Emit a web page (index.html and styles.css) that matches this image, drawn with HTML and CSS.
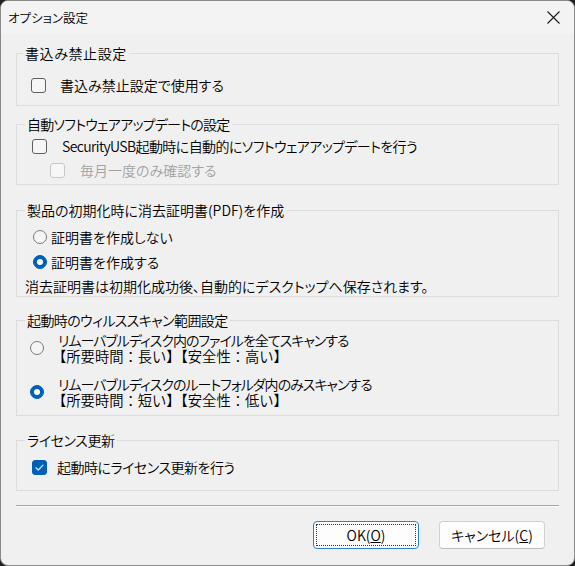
FILE: index.html
```html
<!DOCTYPE html>
<html lang="ja">
<head>
<meta charset="utf-8">
<title>オプション設定</title>
<link rel="stylesheet" href="styles.css">
</head>
<body>
<div class="window">
  <div class="titlebar">
    <span class="title">オプション設定</span>
    <span class="close"><svg width="13" height="13" viewBox="0 0 13 13"><path d="M0.5 0.5L12.5 12.5M12.5 0.5L0.5 12.5" stroke="#1a1a1a" stroke-width="1.1" fill="none"/></svg></span>
  </div>
  <div class="content">
    <fieldset class="group g1">
      <legend class="legend first">書込み禁止設定</legend>
      <div class="row">
        <span class="check"></span><span class="label gap14">書込み禁止設定で使用する</span>
      </div>
    </fieldset>

    <fieldset class="group g2">
      <legend class="legend t075">自動ソフトウェアアップデートの設定</legend>
      <div class="row">
        <span class="check"></span><span class="label gap15 t06">SecurityUSB起動時に自動的にソフトウェアアップデートを行う</span>
      </div>
      <div class="row sub">
        <span class="check disabled"></span><span class="label gap15 dim">毎月一度のみ確認する</span>
      </div>
    </fieldset>

    <fieldset class="group g3">
      <legend class="legend">製品の初期化時に消去証明書(PDF)を作成</legend>
      <div class="row indent">
        <span class="radio"></span><span class="label gap4">証明書を作成しない</span>
      </div>
      <div class="row indent r2">
        <span class="radio on"></span><span class="label gap4">証明書を作成する</span>
      </div>
      <div class="row note">消去証明書は初期化成功後、自動的にデスクトップへ保存されます。</div>
    </fieldset>

    <fieldset class="group g4">
      <legend class="legend t06">起動時のウィルススキャン範囲設定</legend>
      <div class="option">
        <span class="radio"></span>
        <div class="lines">
          <div class="t1">リムーバブルディスク内のファイルを全てスキャンする</div>
          <div class="plain">【所要時間：長い】【安全性：高い】</div>
        </div>
      </div>
      <div class="option o2">
        <span class="radio on"></span>
        <div class="lines">
          <div class="t1">リムーバブルディスクのルートフォルダ内のみスキャンする</div>
          <div class="plain">【所要時間：短い】【安全性：低い】</div>
        </div>
      </div>
    </fieldset>

    <fieldset class="group g5">
      <legend class="legend t04">ライセンス更新</legend>
      <div class="row">
        <span class="check checked"><svg width="15" height="15" viewBox="0 0 15 15"><path d="M4 7.8L6.3 10L11 5.2" stroke="#dbe8f7" stroke-width="1.2" fill="none" stroke-linecap="round" stroke-linejoin="round"/></svg></span><span class="label gap10 t05">起動時にライセンス更新を行う</span>
      </div>
    </fieldset>

    <div class="separator"></div>

    <div class="buttons">
      <button class="btn default"><span class="focus">OK(<u>O</u>)</span></button>
      <button class="btn">キャンセル(<u>C</u>)</button>
    </div>
  </div>
</div>
</body>
</html>
```

FILE: styles.css
```css
html, body {
  margin: 0;
  padding: 0;
}

body {
  width: 575px;
  height: 566px;
  overflow: hidden;
  background: #202020;
  font-family: "Noto Sans CJK JP", "Noto Sans", sans-serif;
  font-size: 14px;
  font-weight: 350;
  color: #000;
  font-feature-settings: "palt";
}

.window {
  box-sizing: border-box;
  width: 575px;
  height: 566px;
  border: 1px solid #8a8a8a;
  border-radius: 8px;
  background: #f0f0f0;
  overflow: hidden;
  display: flex;
  flex-direction: column;
}

.titlebar {
  height: 33px;
  flex: none;
  background: #f3f3f3;
  display: flex;
  align-items: center;
  justify-content: space-between;
  padding: 0 14px 0 7px;
}

.title {
  font-size: 12.5px;
  line-height: 16px;
  color: #000;
}

.close {
  display: flex;
  width: 13px;
  height: 13px;
}

.content {
  padding: 0 15px 0 15px;
  display: flex;
  flex-direction: column;
}

.group {
  margin: 0;
  padding: 0;
  border: 1px solid #dcdcdc;
  min-width: 0;
}

.legend {
  padding: 0 2px;
  margin-left: 8px;
  line-height: 16px;
  font-size: 14px;
}

.legend.first {
  margin-left: 6px;
  letter-spacing: 0.6px;
}

.row {
  display: flex;
  align-items: center;
  height: 20px;
  line-height: 20px;
  white-space: nowrap;
}

.g1 {
  margin-top: 11px;
  padding: 14px 0 10px 0;
}

.g1 .row {
  padding-left: 14px;
}

.g2 {
  margin-top: 10px;
  padding: 4px 0 4px 0;
}

.g2 .row {
  padding-left: 15px;
}

.g2 .row.sub {
  margin-top: 4px;
  padding-left: 33px;
}

.g3 {
  margin-top: 17px;
  padding: 9px 0 0 0;
}

.g3 .indent {
  padding-left: 16px;
}

.g3 .r2 {
  margin-top: 5px;
}

.g3 .note {
  margin-top: 4px;
  padding-left: 8px;
}

.g4 {
  margin-top: 15px;
  padding: 4px 0 7px 0;
}

.option {
  display: flex;
  align-items: center;
  padding-left: 13px;
}

.option.o2 {
  margin-top: 12px;
}

.lines {
  margin-left: 14px;
  line-height: 16px;
  white-space: nowrap;
}

.plain {
  font-size: 14.3px;
  margin-left: -6px;
  font-feature-settings: normal;
}

.g5 {
  margin-top: 16px;
  padding: 9px 0 13px 0;
}

.g5 .row {
  padding-left: 15px;
}

.t04 { letter-spacing: -0.4px; }
.t05 { letter-spacing: -0.5px; }
.t06 { letter-spacing: -0.6px; }
.t075 { letter-spacing: -0.75px; }
.t1 { letter-spacing: -1px; }

.gap4 { margin-left: 4px; }
.gap10 { margin-left: 10px; }
.gap14 { margin-left: 14px; }
.gap15 { margin-left: 15px; }

.dim {
  color: #a2a2a2;
}

.check {
  box-sizing: border-box;
  flex: none;
  width: 15px;
  height: 15px;
  border: 1px solid #5f5f5f;
  border-radius: 3px;
  background: #f6f6f6;
  display: flex;
}

.check.disabled {
  border-color: #c8c8c8;
  background: #f7f7f7;
}

.check.checked {
  border-color: #005fb8;
  background: #005fb8;
}

.check.checked svg {
  margin: -1px;
}

.radio {
  box-sizing: border-box;
  flex: none;
  width: 14px;
  height: 14px;
  border: 1px solid #7a7a7a;
  border-radius: 50%;
  background: #f5f5f5;
  display: flex;
  align-items: center;
  justify-content: center;
}

.radio.on {
  border-color: #005fb8;
  background: #005fb8;
}

.radio.on::after {
  content: "";
  width: 6px;
  height: 6px;
  border-radius: 50%;
  background: #fff;
}

.separator {
  margin-top: 14px;
  border-top: 1px solid #a8a8a8;
  border-bottom: 1px solid #fbfbfb;
}

.buttons {
  margin-top: 14px;
  margin-right: 14px;
  display: flex;
  justify-content: flex-end;
  gap: 20px;
}

.btn {
  box-sizing: border-box;
  width: 106px;
  height: 28px;
  padding: 0;
  border: 1px solid #d0d0d0;
  border-bottom-color: #bdbdbd;
  border-radius: 4px;
  background: #fdfdfd;
  font-family: "Noto Sans CJK JP", "Noto Sans", sans-serif;
  font-size: 14px;
  font-weight: 350;
  font-feature-settings: "palt";
  color: #000;
  line-height: 20px;
  display: flex;
  align-items: center;
  justify-content: center;
}

.btn.default {
  border: 1px solid #2f7fd0;
  padding: 2px;
}

.focus {
  box-sizing: border-box;
  width: 100%;
  height: 100%;
  border: 1px dotted #333;
  display: flex;
  align-items: center;
  justify-content: center;
}
```
